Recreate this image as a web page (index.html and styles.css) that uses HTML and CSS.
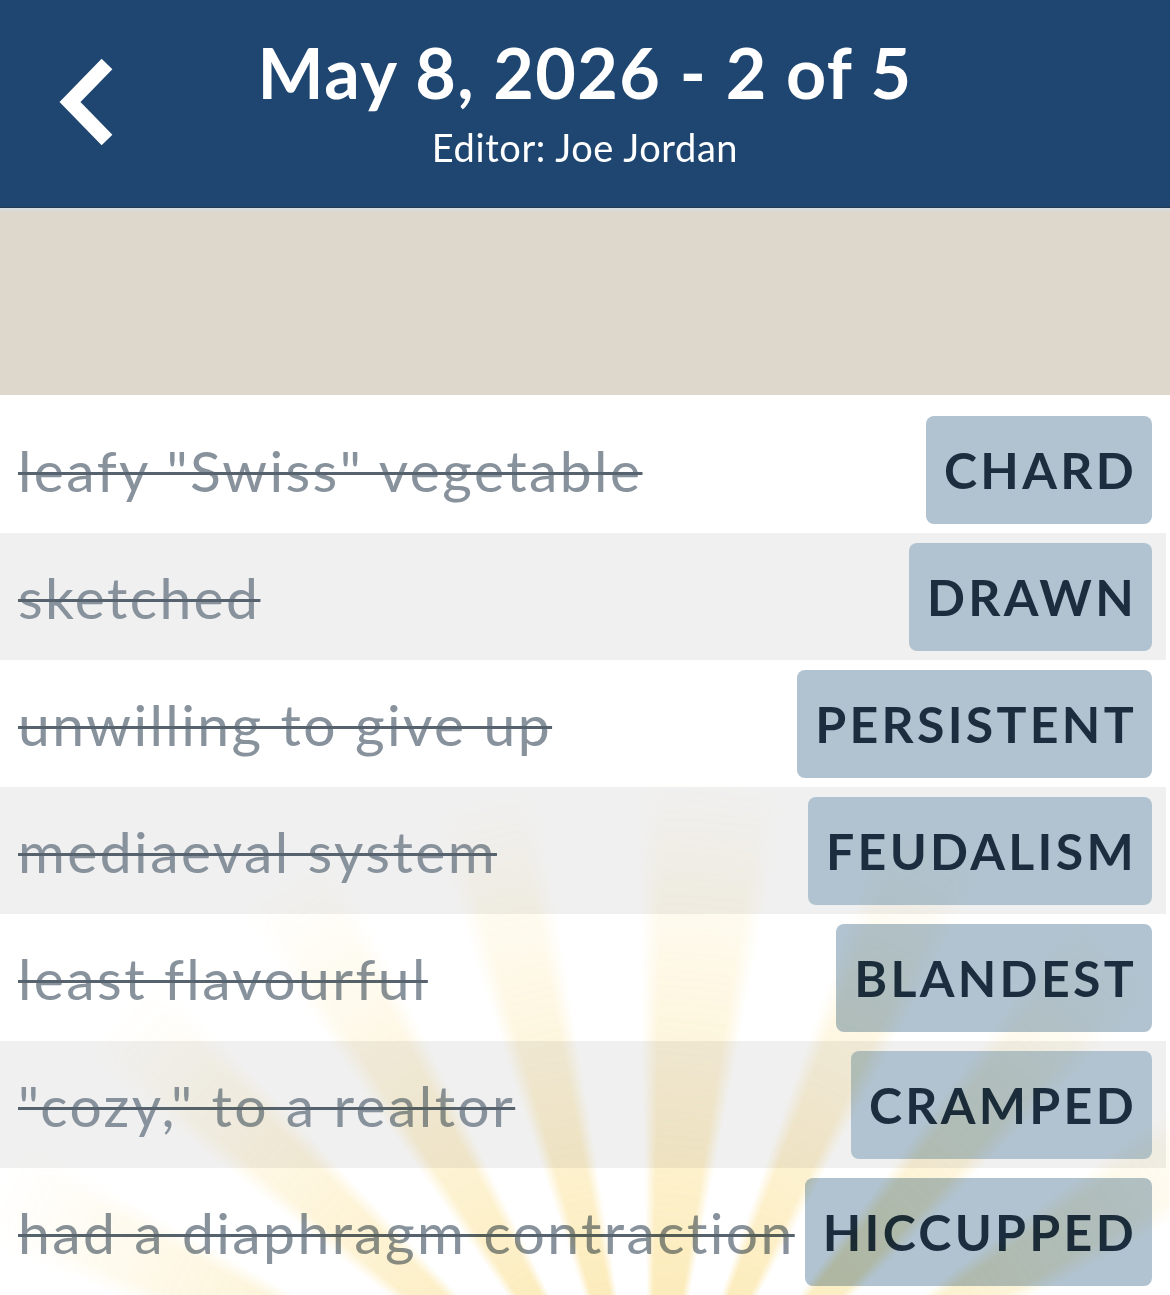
FILE: index.html
```html
<!DOCTYPE html>
<html>
  <head>
    <meta charset="UTF-8">
    <title>May 8, 2026 - 2 of 5</title>
    <link rel="stylesheet" href="styles.css">
  </head>
  <body>
    <div class="header">
      <a class="back" href="#">
        <svg width="70" height="100" viewBox="0 0 70 100">
          <polyline points="54,12 17,50 54,88" fill="none" stroke="#fff" stroke-width="15" stroke-linecap="butt" stroke-linejoin="miter"/>
        </svg>
      </a>
      <div class="title">May 8, 2026 - 2 of 5</div>
      <div class="subtitle">Editor: Joe Jordan</div>
    </div>
    <div class="banner"></div>
    <div class="list">
      <div class="row">
        <span class="clue">leafy "Swiss" vegetable</span>
        <span class="answer">CHARD</span>
      </div>
      <div class="row">
        <span class="clue">sketched</span>
        <span class="answer">DRAWN</span>
      </div>
      <div class="row">
        <span class="clue">unwilling to give up</span>
        <span class="answer">PERSISTENT</span>
      </div>
      <div class="row">
        <span class="clue">mediaeval system</span>
        <span class="answer">FEUDALISM</span>
      </div>
      <div class="row">
        <span class="clue">least flavourful</span>
        <span class="answer">BLANDEST</span>
      </div>
      <div class="row">
        <span class="clue">"cozy," to a realtor</span>
        <span class="answer">CRAMPED</span>
      </div>
      <div class="row">
        <span class="clue">had a diaphragm contraction</span>
        <span class="answer">HICCUPPED</span>
      </div>
      <!-- sunburst drawn over the finished list -->
      <div class="rays"></div>
    </div>
  </body>
</html>
```

FILE: styles.css
```css
body {
  margin: 0;
  background-color: #fff;
  font-family: 'Lato', 'Open Sans', sans-serif;
  overflow: hidden;
}
.header {
  position: relative;
  height: 208px;
  background-color: #1e4670;
  color: #fff;
  text-align: center;
  border-bottom: 1px solid #253a50;
  box-sizing: border-box;
}
.back {
  position: absolute;
  left: 53px;
  top: 52px;
  display: block;
  width: 70px;
  height: 100px;
}
.title {
  padding-top: 30px;
  font-size: 70px;
  font-weight: 700;
  line-height: 84px;
  letter-spacing: 1.4px;
}
.subtitle {
  font-size: 38px;
  line-height: 44px;
  margin-top: 11px;
  letter-spacing: 0.6px;
}
.banner {
  height: 187px;
  background-color: #ded8cc;
  border-top: 3px solid #d9dcdc;
  box-sizing: border-box;
}
.list {
  position: relative;
  padding: 11px 4px 0 0;
  background-color: #fff;
}
.row {
  display: flex;
  align-items: center;
  justify-content: space-between;
  gap: 10px;
  height: 127px;
  padding: 0 14px 0 18px;
  box-sizing: border-box;
}
.row:nth-child(even) {
  background-color: #f0f0f0;
}
.clue {
  font-size: 57px;
  letter-spacing: 2.4px;
  color: #88929c;
  white-space: nowrap;
  text-decoration: line-through;
  text-decoration-color: #56636f;
  text-decoration-thickness: 3px;
}
.answer {
  flex-shrink: 0;
  height: 108px;
  display: flex;
  align-items: center;
  padding: 0 15px 0 18px;
  background-color: #b1c3d0;
  border-radius: 8px;
  color: #1b2d3f;
  font-size: 50px;
  font-weight: 700;
  letter-spacing: 3.3px;
}
.rays {
  position: absolute;
  left: 0;
  top: 0;
  width: 100%;
  height: 100%;
  pointer-events: none;
  mix-blend-mode: multiply;
  opacity: 0.75;
  background: repeating-conic-gradient(from 4deg at 650px 1105px, #fbe4a0 0deg 5deg, rgba(255, 255, 255, 0) 7deg 15deg, #fbe4a0 17deg);
  -webkit-mask-image: radial-gradient(circle 720px at 650px 1105px, #000 25%, rgba(0, 0, 0, 0) 100%);
  mask-image: radial-gradient(circle 720px at 650px 1105px, #000 25%, rgba(0, 0, 0, 0) 100%);
}
```
